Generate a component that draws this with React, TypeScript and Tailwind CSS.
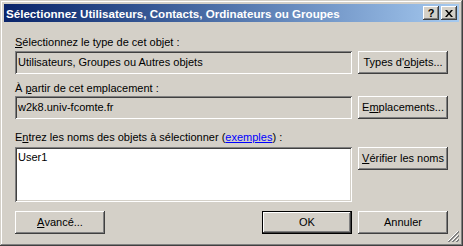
import React from 'react';

const raised =
  'shadow-[inset_-1px_-1px_#404040,inset_1px_1px_#ffffff,inset_-2px_-2px_#808080,inset_2px_2px_#d4d0c8]';
const sunken =
  'shadow-[inset_1px_1px_#808080,inset_-1px_-1px_#ffffff,inset_2px_2px_#404040,inset_-2px_-2px_#d4d0c8]';

function Btn({ children, isDefault }: { children: React.ReactNode; isDefault?: boolean }) {
  return (
    <div
      className={`w-[90px] h-[23px] shrink-0 flex items-center justify-center bg-[#d4d0c8] text-black ${raised} ${
        isDefault ? 'border border-black' : ''
      }`}
    >
      {children}
    </div>
  );
}

function Field({ children, white }: { children: React.ReactNode; white?: boolean }) {
  return (
    <div
      className={`flex-1 h-[23px] flex items-center pl-[3px] ${white ? 'bg-white' : 'bg-[#d4d0c8]'} ${sunken}`}
    >
      {children}
    </div>
  );
}

export default function App() {
  return (
    <div
      className="relative w-[463px] h-[246px] bg-[#d4d0c8] p-[4px] text-[11px] leading-[13px] text-black shadow-[inset_-1px_-1px_#404040,inset_1px_1px_#d4d0c8,inset_-2px_-2px_#808080,inset_2px_2px_#ffffff]"
      style={{ fontFamily: '"Liberation Sans", Arial, sans-serif' }}
    >
      {/* title bar */}
      <div className="h-[18px] flex items-center bg-gradient-to-r from-[#0a246a] to-[#a6caf0] pl-[2px] pr-[2px]">
        <span className="flex-1 font-bold text-white whitespace-nowrap text-[11.6px]">
          Sélectionnez Utilisateurs, Contacts, Ordinateurs ou Groupes
        </span>
        <div className={`w-[16px] h-[14px] bg-[#d4d0c8] ${raised} flex items-center justify-center font-bold text-[11px]`}>
          ?
        </div>
        <div className={`ml-[2px] w-[16px] h-[14px] bg-[#d4d0c8] ${raised} flex items-center justify-center`}>
          <svg width="8" height="7" viewBox="0 0 8 7">
            <path d="M0 0h2l2 2.5L6 0h2L5 3.5 8 7H6L4 4.5 2 7H0l3-3.5z" fill="black" />
          </svg>
        </div>
      </div>

      {/* body */}
      <div className="flex flex-col px-[11px] pt-[14px]">
        <div className="h-[13px] mb-[2px]">
          <u>S</u>électionnez le type de cet objet :
        </div>
        <div className="flex gap-[6px]">
          <Field>Utilisateurs, Groupes ou Autres objets</Field>
          <Btn>
            Types d'<u>o</u>bjets...
          </Btn>
        </div>

        <div className="h-[13px] mt-[8px] mb-[1px]">
          À <u>p</u>artir de cet emplacement :
        </div>
        <div className="flex gap-[6px]">
          <Field>w2k8.univ-fcomte.fr</Field>
          <Btn>
            E<u>m</u>placements...
          </Btn>
        </div>

        <div className="h-[13px] mt-[12px] mb-[3px]">
          E<u>n</u>trez les noms des objets à sélectionner (
          <span className="text-[#0000ff] underline">exemples</span>) :
        </div>
        <div className="flex gap-[6px] items-start">
          <div className={`flex-1 h-[55px] bg-white pl-[3px] pt-[4px] ${sunken}`}>User1</div>
          <Btn>
            <u>V</u>érifier les noms
          </Btn>
        </div>

        <div className="flex mt-[9px]">
          <Btn>
            <u>A</u>vancé...
          </Btn>
          <div className="flex-1" />
          <Btn isDefault>OK</Btn>
          <div className="w-[6px]" />
          <Btn>Annuler</Btn>
        </div>
      </div>

      {/* size grip */}
      <svg className="absolute right-[4px] bottom-[4px]" width="12" height="12" viewBox="0 0 12 12">
        <path d="M11 1L1 11M11 5L5 11M11 9L9 11" stroke="#ffffff" strokeWidth="1" />
        <path d="M12 1L1 12M12 2L2 12M12 5L5 12M12 6L6 12M12 9L9 12M12 10L10 12" stroke="#808080" strokeWidth="1" />
      </svg>
    </div>
  );
}
